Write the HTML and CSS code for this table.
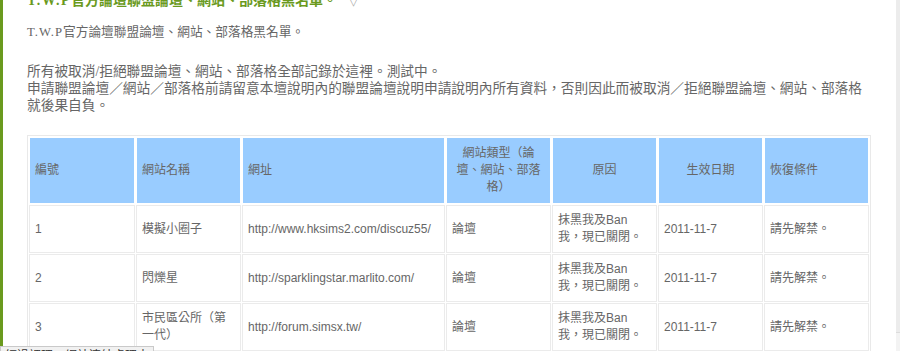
FILE: index.html
```html
<!DOCTYPE html>
<html lang="zh-Hant">
<head>
<meta charset="utf-8">
<title>T.W.P官方論壇聯盟論壇、網站、部落格黑名單</title>
<link rel="stylesheet" href="styles.css">
</head>
<body>
<div class="page">
  <div class="post">
    <h3 class="title"><span class="latin">T.W.P</span>官方論壇聯盟論壇、網站、部落格黑名單。 <span class="arrow">▽</span></h3>
    <p class="desc"><span class="latin">T.W.P</span>官方論壇聯盟論壇、網站、部落格黑名單。</p>
    <p class="body-text">所有被取消/拒絕聯盟論壇、網站、部落格全部記錄於這裡。測試中。<br>申請聯盟論壇／網站／部落格前請留意本壇說明內的聯盟論壇說明申請說明內所有資料，否則因此而被取消／拒絕聯盟論壇、網站、部落格就後果自負。</p>
    <table class="list">
      <thead>
        <tr>
          <th class="c-no">編號</th>
          <th class="c-name">網站名稱</th>
          <th class="c-url">網址</th>
          <th class="c-type center">網站類型（論壇、網站、部落格）</th>
          <th class="c-reason center">原因</th>
          <th class="c-date center">生效日期</th>
          <th class="c-cond">恢復條件</th>
        </tr>
      </thead>
      <tbody>
        <tr>
          <td>1</td>
          <td>模擬小圈子</td>
          <td>http://www.hksims2.com/discuz55/</td>
          <td>論壇</td>
          <td>抹黑我及Ban我，現已關閉。</td>
          <td>2011-11-7</td>
          <td>請先解禁。</td>
        </tr>
        <tr>
          <td>2</td>
          <td>閃爍星</td>
          <td>http://sparklingstar.marlito.com/</td>
          <td>論壇</td>
          <td>抹黑我及Ban我，現已關閉。</td>
          <td>2011-11-7</td>
          <td>請先解禁。</td>
        </tr>
        <tr>
          <td>3</td>
          <td>市民區公所（第一代）</td>
          <td>http://forum.simsx.tw/</td>
          <td>論壇</td>
          <td>抹黑我及Ban我，現已關閉。</td>
          <td>2011-11-7</td>
          <td>請先解禁。</td>
        </tr>
      </tbody>
    </table>
  </div>
  <div class="scrollbar"><div class="thumb"></div></div>
  <div class="status">經過調理。網站連結處理中</div>
</div>
</body>
</html>
```

FILE: styles.css
```css
html, body {
  margin: 0;
  padding: 0;
  background: #ffffff;
}

.page {
  position: relative;
  width: 900px;
  height: 351px;
  overflow: hidden;
}

.post {
  width: 845px;
  margin-top: -9px;
  padding-left: 24px;
  border-left: 3px solid #6a9a1e;
  padding-bottom: 20px;
  font-family: "Liberation Serif", "Noto Sans CJK TC", serif;
  color: #666666;
}

.title {
  margin: 0;
  font-size: 14px;
  line-height: 20px;
  font-weight: bold;
  color: #6a9a1e;
}

.title .latin {
  letter-spacing: 1.5px;
}

.arrow {
  font-weight: normal;
  color: #aaaaaa;
  font-size: 13px;
  font-family: "DejaVu Sans", sans-serif;
  margin-left: 8px;
}

.desc {
  margin: 13px 0 0;
  font-size: 12.7px;
  line-height: 17px;
}

.desc .latin {
  letter-spacing: 1px;
}

.body-text {
  margin: 22px 0 0;
  font-size: 13.7px;
  line-height: 17px;
}

.list {
  margin-top: 21px;
  box-sizing: border-box;
  width: 844px;
  table-layout: fixed;
  border: 1px solid #e9e9e9;
  border-collapse: separate;
  border-spacing: 1px;
  font-family: "Liberation Sans", "Noto Sans CJK TC", sans-serif;
  font-size: 12px;
  line-height: 17px;
  color: #666666;
}

.list th,
.list td {
  box-sizing: border-box;
  text-align: left;
  vertical-align: middle;
  font-weight: normal;
}

.list th {
  background: #99ccff;
  border: 1px solid #ffffff;
  padding: 7px 5px;
}

.list td {
  border: 1px solid #ebebeb;
  padding: 6px 5px;
}

.list th.center {
  text-align: center;
}

.c-no { width: 106px; }
.c-name { width: 105px; }
.c-url { width: 203px; }
.c-type { width: 105px; }
.c-reason { width: 105px; }
.c-date { width: 105px; }
.c-cond { width: 105px; }

.scrollbar {
  position: absolute;
  top: 0;
  right: 0;
  width: 4px;
  height: 351px;
  background: #f3f3f3;
}

.thumb {
  height: 332px;
  background: #ececec;
  border-bottom: 1px solid #dcdcdc;
}

.status {
  position: absolute;
  left: 0;
  top: 346px;
  padding: 0 4px;
  height: 16px;
  background: #f1f1f1;
  border: 1px solid #c9c9c9;
  font-family: "Noto Sans CJK TC", sans-serif;
  font-size: 12px;
  line-height: 16px;
  color: #333333;
}
```
